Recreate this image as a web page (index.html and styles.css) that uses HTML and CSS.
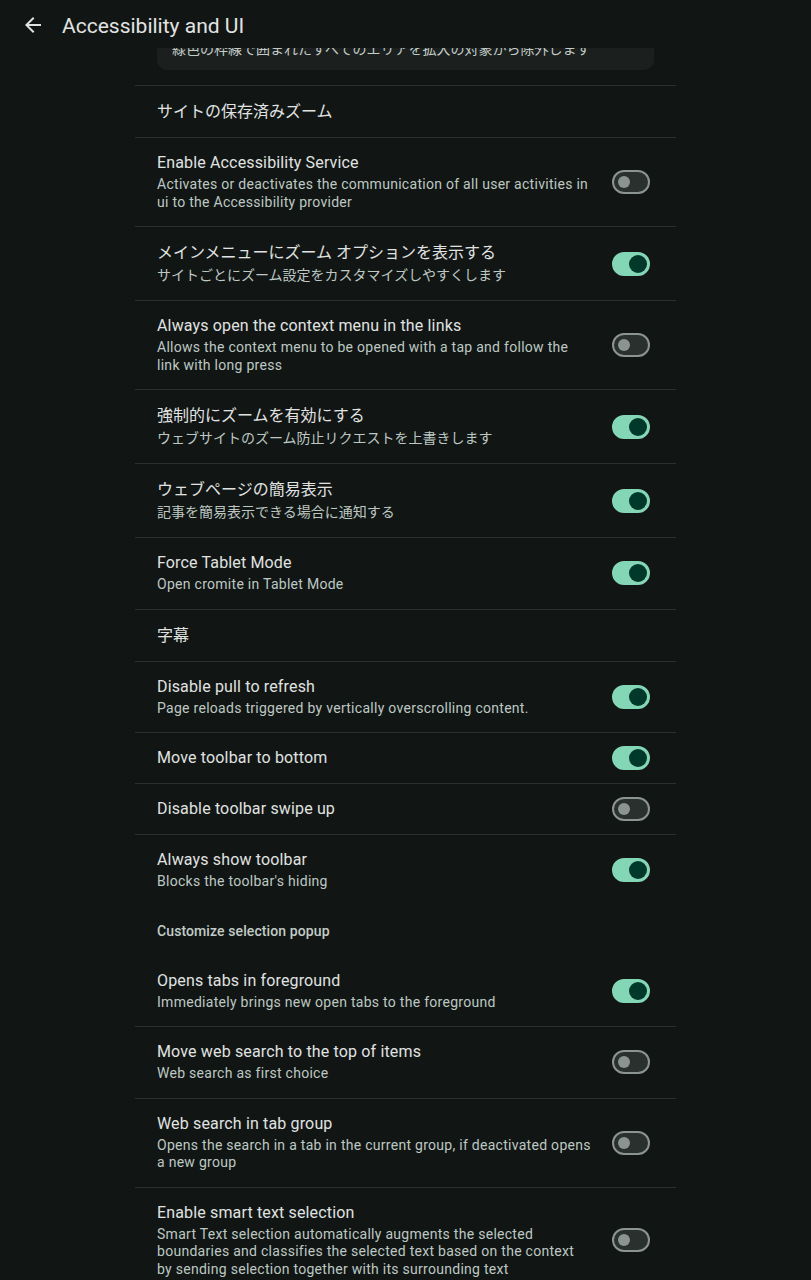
FILE: index.html
```html
<!DOCTYPE html>
<html lang="ja">
<head>
    <meta charset="UTF-8">
    <meta name="viewport" content="width=device-width, initial-scale=1.0">
    <title>Accessibility and UI</title>
    <link rel="stylesheet" href="styles.css">
</head>
<body>

<header class="app-bar">
    <svg class="back" viewBox="0 0 24 24" width="24" height="24">
        <path d="M20 11H7.83l5.59-5.59L12 4l-8 8 8 8 1.41-1.41L7.83 13H20v-2z"/>
    </svg>
    <span class="app-title">Accessibility and UI</span>
</header>

<main class="viewport">
<div class="list">
    <div class="card-row">
        <div class="note-card">緑色の枠線で囲まれたすべてのエリアを拡大の対象から除外します</div>
    </div>

    <div class="pref">
        <div class="pref-text ja"><div class="pref-title">サイトの保存済みズーム</div></div>
    </div>

    <div class="pref">
        <div class="pref-text">
            <div class="pref-title">Enable Accessibility Service</div>
            <div class="pref-summary">Activates or deactivates the communication of all user activities in ui to the Accessibility provider</div>
        </div>
        <span class="switch"></span>
    </div>

    <div class="pref">
        <div class="pref-text ja">
            <div class="pref-title">メインメニューにズーム オプションを表示する</div>
            <div class="pref-summary">サイトごとにズーム設定をカスタマイズしやすくします</div>
        </div>
        <span class="switch on"></span>
    </div>

    <div class="pref">
        <div class="pref-text">
            <div class="pref-title">Always open the context menu in the links</div>
            <div class="pref-summary">Allows the context menu to be opened with a tap and follow the link with long press</div>
        </div>
        <span class="switch"></span>
    </div>

    <div class="pref">
        <div class="pref-text ja">
            <div class="pref-title">強制的にズームを有効にする</div>
            <div class="pref-summary">ウェブサイトのズーム防止リクエストを上書きします</div>
        </div>
        <span class="switch on"></span>
    </div>

    <div class="pref">
        <div class="pref-text ja">
            <div class="pref-title">ウェブページの簡易表示</div>
            <div class="pref-summary">記事を簡易表示できる場合に通知する</div>
        </div>
        <span class="switch on"></span>
    </div>

    <div class="pref">
        <div class="pref-text">
            <div class="pref-title">Force Tablet Mode</div>
            <div class="pref-summary">Open cromite in Tablet Mode</div>
        </div>
        <span class="switch on"></span>
    </div>

    <div class="pref">
        <div class="pref-text ja"><div class="pref-title">字幕</div></div>
    </div>

    <div class="pref">
        <div class="pref-text">
            <div class="pref-title">Disable pull to refresh</div>
            <div class="pref-summary">Page reloads triggered by vertically overscrolling content.</div>
        </div>
        <span class="switch on"></span>
    </div>

    <div class="pref">
        <div class="pref-text"><div class="pref-title">Move toolbar to bottom</div></div>
        <span class="switch on"></span>
    </div>

    <div class="pref">
        <div class="pref-text"><div class="pref-title">Disable toolbar swipe up</div></div>
        <span class="switch"></span>
    </div>

    <div class="pref no-divider">
        <div class="pref-text">
            <div class="pref-title">Always show toolbar</div>
            <div class="pref-summary">Blocks the toolbar's hiding</div>
        </div>
        <span class="switch on"></span>
    </div>

    <div class="category">Customize selection popup</div>

    <div class="pref">
        <div class="pref-text">
            <div class="pref-title">Opens tabs in foreground</div>
            <div class="pref-summary">Immediately brings new open tabs to the foreground</div>
        </div>
        <span class="switch on"></span>
    </div>

    <div class="pref">
        <div class="pref-text">
            <div class="pref-title">Move web search to the top of items</div>
            <div class="pref-summary">Web search as first choice</div>
        </div>
        <span class="switch"></span>
    </div>

    <div class="pref">
        <div class="pref-text">
            <div class="pref-title">Web search in tab group</div>
            <div class="pref-summary">Opens the search in a tab in the current group, if deactivated opens a new group</div>
        </div>
        <span class="switch"></span>
    </div>

    <div class="pref">
        <div class="pref-text">
            <div class="pref-title">Enable smart text selection</div>
            <div class="pref-summary">Smart Text selection automatically augments the selected boundaries and classifies the selected text based on the context by sending selection together with its surrounding text</div>
        </div>
        <span class="switch"></span>
    </div>
</div>
</main>

</body>
</html>
```

FILE: styles.css
```css
body {
    margin: 0;
    height: 100vh;
    display: flex;
    flex-direction: column;
    background-color: #111614;
    color: #e0e3e1;
    font-family: Roboto, "Noto Sans CJK JP", sans-serif;
    overflow: hidden;
}
.app-bar {
    flex: none;
    height: 48px;
    display: flex;
    align-items: center;
    gap: 17px;
    padding-left: 21px;
}
.back {
    fill: #e0e3e1;
    margin-top: 2px;
}
.app-title {
    font-size: 21px;
    color: #e2e4e2;
    margin-top: 3px;
}
.viewport {
    flex: 1;
    overflow: hidden;
}
.list {
    max-width: 541px;
    margin: 0 auto;
}
/* list is scrolled a little: the top of the card sits under the app bar */
.card-row {
    margin-top: -20px;
    padding: 0 22px 15px;
    border-bottom: 1px solid #2b302f;
}
.note-card {
    background-color: #1b201f;
    border-radius: 10px;
    padding: 12px 15px;
    font-size: 14px;
    line-height: 18px;
    color: #c4ccc8;
    white-space: nowrap;
    overflow: hidden;
}
.pref {
    display: flex;
    align-items: center;
    gap: 20px;
    padding: 13px 26px 13px 22px;
    border-bottom: 1px solid #2b302f;
}
.pref.no-divider {
    border-bottom: none;
}
.pref-text {
    flex: 1;
    padding: 2px 0;
}
.pref-title {
    font-size: 16px;
    line-height: 20px;
    letter-spacing: 0.15px;
    color: #e0e3e1;
}
.pref-summary {
    font-size: 14px;
    line-height: 17.5px;
    letter-spacing: 0.28px;
    margin-top: 3px;
    color: #bec8c3;
}
.pref-text.ja .pref-title {
    line-height: 21px;
    letter-spacing: 0;
}
.pref-text.ja .pref-summary {
    line-height: 19px;
    letter-spacing: 0;
}
.category {
    height: 50px;
    display: flex;
    align-items: center;
    padding-left: 22px;
    font-size: 14px;
    font-weight: 500;
    letter-spacing: 0.1px;
    color: #c2ccc7;
}
.switch {
    position: relative;
    flex: none;
    width: 38px;
    height: 24px;
    box-sizing: border-box;
    border: 2px solid #8b9490;
    border-radius: 12px;
    background-color: #2a302e;
}
.switch::after {
    content: "";
    position: absolute;
    top: 4px;
    left: 4px;
    width: 12px;
    height: 12px;
    border-radius: 50%;
    background-color: #8b9490;
}
.switch.on {
    border-color: #84d7b6;
    background-color: #84d7b6;
}
.switch.on::after {
    top: 1px;
    left: 15px;
    width: 18px;
    height: 18px;
    background-color: #00382a;
}
```
